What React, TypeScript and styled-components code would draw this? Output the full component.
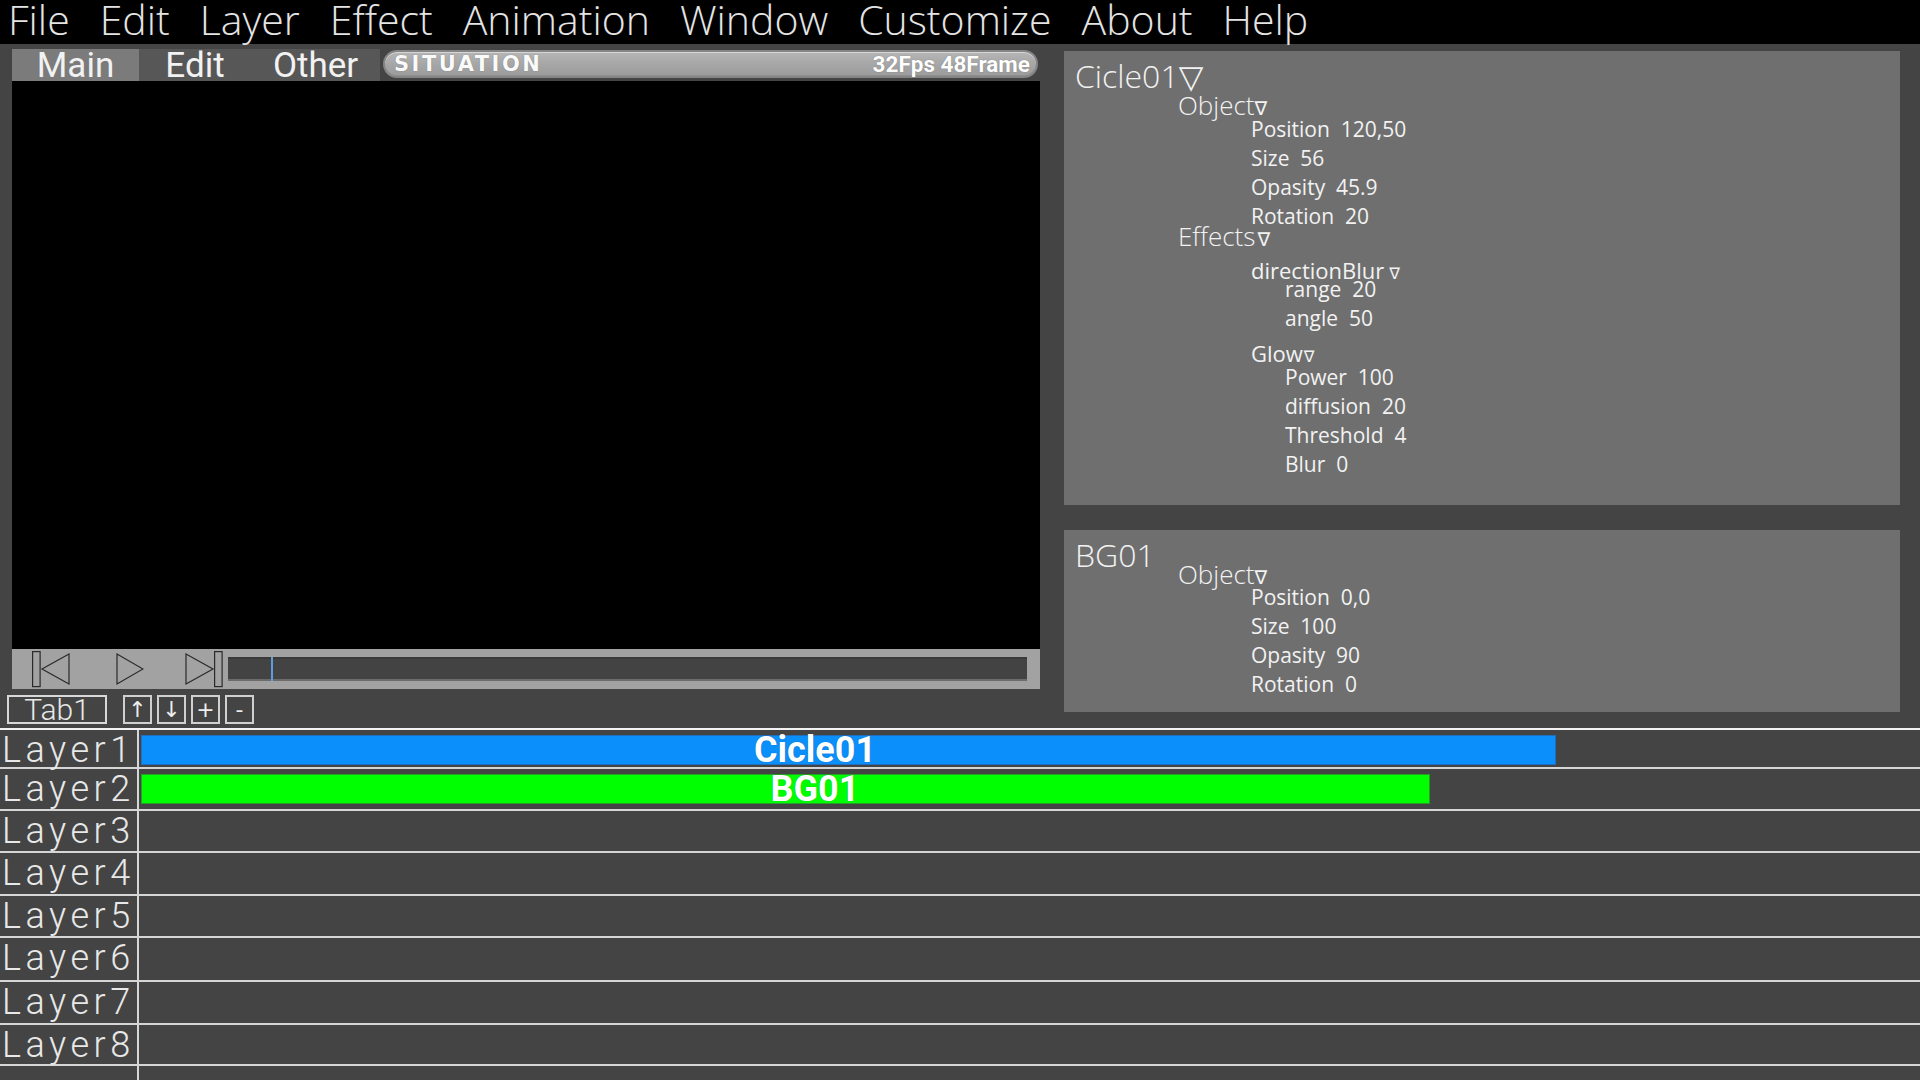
import styled, { createGlobalStyle } from "styled-components";

const GlobalStyle = createGlobalStyle`
  html, body {
    margin: 0;
    padding: 0;
    background: #444444;
    overflow: hidden;
  }
  body {
    font-family: "Open Sans", "DejaVu Sans", sans-serif;
  }
  * {
    box-sizing: border-box;
  }
`;

const Screen = styled.div`
  width: 1920px;
  height: 1080px;
  display: flex;
  flex-direction: column;
  background: #444444;
  color: #eeeeee;
  overflow: hidden;
`;

const MenuBar = styled.nav`
  position: relative;
  z-index: 2;
  flex: none;
  height: 44px;
  display: flex;
  gap: 30px;
  padding-left: 8px;
  background: #000;
`;

const MenuItem = styled.div`
  font-family: "Open Sans", sans-serif;
  font-size: 41px;
  font-weight: 300;
  line-height: 38px;
  color: #e4e4e4;
  white-space: nowrap;
`;

const Workspace = styled.div`
  flex: none;
  height: 684px;
  display: flex;
  gap: 24px;
  padding: 0 20px 0 12px;
`;

const LeftColumn = styled.div`
  width: 1028px;
  display: flex;
  flex-direction: column;
  padding-top: 5px;
`;

const ModeBar = styled.div`
  height: 32px;
  display: flex;
`;

const ModeTab = styled.div<{ $active?: boolean; $w: number }>`
  width: ${(p) => p.$w}px;
  background: ${(p) => (p.$active ? "#7b7b7b" : "#575757")};
  font-family: Roboto, sans-serif;
  font-size: 35px;
  line-height: 34px;
  text-align: center;
  color: #f2f2f2;
`;

const StatusPill = styled.div`
  flex: 1;
  height: 28px;
  margin: 1px 2px 0 3px;
  display: flex;
  align-items: center;
  justify-content: space-between;
  padding: 0 6px 0 9px;
  border: 2px solid #858585;
  border-radius: 14px;
  background: linear-gradient(#b6b6b6, #a4a4a4 60%, #9c9c9c);
  box-shadow: inset 0 1px 0 #d6d6d6, inset 0 -1px 0 #8f8f8f;
`;

const StatusTitle = styled.span`
  font-family: "DejaVu Sans", sans-serif;
  font-size: 21px;
  font-weight: 700;
  letter-spacing: 2.5px;
  color: #fafafa;
  text-shadow: 0 0 1px #6a6a6a;
`;

const StatusInfo = styled.span`
  font-family: Roboto, sans-serif;
  font-size: 22.5px;
  font-weight: 700;
  color: #ffffff;
  text-shadow: 0 0 1px #6a6a6a;
`;

const Preview = styled.div`
  height: 568px;
  flex: none;
  background: #000;
`;

const Transport = styled.div`
  height: 40px;
  flex: none;
  display: flex;
  align-items: center;
  padding: 0 13px 0 20px;
  background: #a2a2a2;
`;

const ControlButton = styled.button<{ $ml: number; $w: number }>`
  width: ${(p) => p.$w}px;
  height: 40px;
  margin-left: ${(p) => p.$ml}px;
  padding: 0;
  border: 0;
  background: none;
  display: block;

  svg {
    display: block;
  }
`;

const Track = styled.div`
  position: relative;
  flex: 1;
  height: 24px;
  margin-left: 5px;
  background: #434343;
  border-top: 2px solid #3a3a3a;
  border-bottom: 2px solid #6c6c6c;
`;

const Playhead = styled.div`
  position: absolute;
  left: 43px;
  top: -2px;
  bottom: -2px;
  width: 2px;
  background: #5c9fe0;
`;

const TabStrip = styled.div`
  height: 29px;
  margin: 6px 0 0 -5px;
  display: flex;
  gap: 5px;
`;

const TabBox = styled.div`
  width: 100px;
  margin-right: 11px;
  border: 2px solid #d8d8d8;
  font-family: Roboto, sans-serif;
  font-size: 30px;
  font-weight: 300;
  line-height: 25px;
  text-align: center;
  color: #e8e8e8;
`;

const StripButton = styled.div`
  width: 29px;
  border: 2px solid #d0d0d0;
  font-family: "DejaVu Sans", sans-serif;
  font-size: 22px;
  line-height: 25px;
  text-align: center;
  color: #eeeeee;
`;

const Inspector = styled.div`
  width: 836px;
  display: flex;
  flex-direction: column;
  gap: 25px;
  padding-top: 7px;
`;

const Panel = styled.section<{ $h: number }>`
  height: ${(p) => p.$h}px;
  flex: none;
  padding: 7px 0 0 11px;
  background: #6f6f6f;
  font-family: "Open Sans", sans-serif;
  font-weight: 300;
  color: #f2f2f2;
  white-space: pre;
`;

const PanelTitle = styled.div`
  font-size: 32px;
  line-height: 36px;
`;

const GroupLabel = styled.div<{ $mt: number }>`
  margin: ${(p) => p.$mt}px 0 0 103px;
  font-size: 26px;
  line-height: 20px;
`;

const SubGroupLabel = styled.div<{ $mt: number }>`
  margin: ${(p) => p.$mt}px 0 0 176px;
  font-size: 22px;
  font-weight: 400;
  line-height: 24px;
`;

const PropList = styled.div<{ $mt: number; $indent: number }>`
  margin: ${(p) => p.$mt}px 0 0 ${(p) => p.$indent}px;
`;

const Prop = styled.div`
  font-size: 21px;
  line-height: 29px;
  font-weight: 400;
`;

const Caret = styled.span<{ $size: number; $gap?: number }>`
  font-family: "DejaVu Sans", sans-serif;
  font-size: ${(p) => p.$size}px;
  font-weight: 400;
  line-height: 1;
  margin-left: ${(p) => p.$gap ?? 0}px;
`;

const Timeline = styled.div`
  flex: 1;
  display: flex;
  flex-direction: column;
  border-top: 2px solid #f2f2f2;
`;

const LayerRow = styled.div<{ $h: number }>`
  height: ${(p) => p.$h + 2}px;
  flex: none;
  display: grid;
  grid-template-columns: 139px 1fr;
  border-bottom: 2px solid #d6d6d6;
`;

const FillerRow = styled.div`
  flex: 1;
  display: grid;
  grid-template-columns: 139px 1fr;
`;

const LayerName = styled.div`
  padding: 0 0 0 2px;
  border-right: 2px solid #d6d6d6;
  font-family: Roboto, sans-serif;
  font-size: 36px;
  font-weight: 300;
  line-height: 40px;
  letter-spacing: 4.5px;
  color: #e8e8e8;
  white-space: nowrap;
`;

const Lane = styled.div`
  display: flex;
  align-items: center;
  padding-left: 2px;
`;

const Clip = styled.div<{ $w: number; $color: string; $edge: string }>`
  width: ${(p) => p.$w}px;
  height: 30px;
  background: ${(p) => p.$color};
  border: 1px solid ${(p) => p.$edge};
`;

const ClipLabel = styled.div`
  width: 1346px;
  font-family: Roboto, sans-serif;
  font-size: 36px;
  font-weight: 700;
  line-height: 28px;
  text-align: center;
  color: #ffffff;
  white-space: nowrap;
  text-shadow: 0 0 1px rgba(0, 0, 0, 0.35);
`;

const menu = ["File", "Edit", "Layer", "Effect", "Animation", "Window", "Customize", "About", "Help"];

const layers = [
  { name: "Layer1", h: 37, clip: { label: "Cicle01", w: 1415, color: "#0a8ffb", edge: "#1f6fbe" } },
  { name: "Layer2", h: 40, clip: { label: "BG01", w: 1289, color: "#00ff00", edge: "#23a023" } },
  { name: "Layer3", h: 40 },
  { name: "Layer4", h: 41 },
  { name: "Layer5", h: 40 },
  { name: "Layer6", h: 42 },
  { name: "Layer7", h: 41 },
  { name: "Layer8", h: 39 },
];

const SkipBackIcon = () => (
  <svg width="38" height="40" viewBox="0 0 38 40" fill="none" stroke="#2a2a2a" strokeWidth="1.2">
    <rect x="0.6" y="2.6" width="7.5" height="35" />
    <path d="M37 5 L10 20 L37 35 Z" />
  </svg>
);

const PlayIcon = () => (
  <svg width="28" height="40" viewBox="0 0 28 40" fill="none" stroke="#2a2a2a" strokeWidth="1.2">
    <path d="M1 5 L27 20 L1 35 Z" />
  </svg>
);

const SkipForwardIcon = () => (
  <svg width="38" height="40" viewBox="0 0 38 40" fill="none" stroke="#2a2a2a" strokeWidth="1.2">
    <path d="M1 5 L28 20 L1 35 Z" />
    <rect x="29.6" y="2.6" width="7.5" height="35" />
  </svg>
);

export default function App() {
  return (
    <Screen>
      <GlobalStyle />
      <MenuBar>
        {menu.map((m) => (
          <MenuItem key={m}>{m}</MenuItem>
        ))}
      </MenuBar>

      <Workspace>
        <LeftColumn>
          <ModeBar>
            <ModeTab $active $w={127}>Main</ModeTab>
            <ModeTab $w={112}>Edit</ModeTab>
            <ModeTab $w={129}>Other</ModeTab>
            <StatusPill>
              <StatusTitle>SITUATION</StatusTitle>
              <StatusInfo>32Fps 48Frame</StatusInfo>
            </StatusPill>
          </ModeBar>
          <Preview />
          <Transport>
            <ControlButton $ml={0} $w={38}>
              <SkipBackIcon />
            </ControlButton>
            <ControlButton $ml={46} $w={28}>
              <PlayIcon />
            </ControlButton>
            <ControlButton $ml={41} $w={38}>
              <SkipForwardIcon />
            </ControlButton>
            <Track>
              <Playhead />
            </Track>
          </Transport>
          <TabStrip>
            <TabBox>Tab1</TabBox>
            <StripButton>↑</StripButton>
            <StripButton>↓</StripButton>
            <StripButton>+</StripButton>
            <StripButton>-</StripButton>
          </TabStrip>
        </LeftColumn>

        <Inspector>
          <Panel $h={454}>
            <PanelTitle>
              Cicle01<Caret $size={32}>▽</Caret>
            </PanelTitle>
            <GroupLabel $mt={1}>
              Object<Caret $size={19}>∇</Caret>
            </GroupLabel>
            <PropList $mt={-3} $indent={176}>
              <Prop>Position  120,50</Prop>
              <Prop>Size  56</Prop>
              <Prop>Opasity  45.9</Prop>
              <Prop>Rotation  20</Prop>
            </PropList>
            <GroupLabel $mt={-5}>
              Effects<Caret $size={19} $gap={2}>∇</Caret>
            </GroupLabel>
            <SubGroupLabel $mt={9}>
              directionBlur<Caret $size={16} $gap={5}>∇</Caret>
            </SubGroupLabel>
            <PropList $mt={-7} $indent={210}>
              <Prop>range  20</Prop>
              <Prop>angle  50</Prop>
            </PropList>
            <SubGroupLabel $mt={8}>
              Glow<Caret $size={16} $gap={1}>∇</Caret>
            </SubGroupLabel>
            <PropList $mt={-2} $indent={210}>
              <Prop>Power  100</Prop>
              <Prop>diffusion  20</Prop>
              <Prop>Threshold  4</Prop>
              <Prop>Blur  0</Prop>
            </PropList>
          </Panel>

          <Panel $h={182}>
            <PanelTitle>BG01</PanelTitle>
            <GroupLabel $mt={-9}>
              Object<Caret $size={19}>∇</Caret>
            </GroupLabel>
            <PropList $mt={-4} $indent={176}>
              <Prop>Position  0,0</Prop>
              <Prop>Size  100</Prop>
              <Prop>Opasity  90</Prop>
              <Prop>Rotation  0</Prop>
            </PropList>
          </Panel>
        </Inspector>
      </Workspace>

      <Timeline>
        {layers.map((l) => (
          <LayerRow key={l.name} $h={l.h}>
            <LayerName>{l.name}</LayerName>
            <Lane>
              {l.clip && (
                <Clip $w={l.clip.w} $color={l.clip.color} $edge={l.clip.edge}>
                  <ClipLabel>{l.clip.label}</ClipLabel>
                </Clip>
              )}
            </Lane>
          </LayerRow>
        ))}
        <FillerRow>
          <LayerName />
          <Lane />
        </FillerRow>
      </Timeline>
    </Screen>
  );
}
